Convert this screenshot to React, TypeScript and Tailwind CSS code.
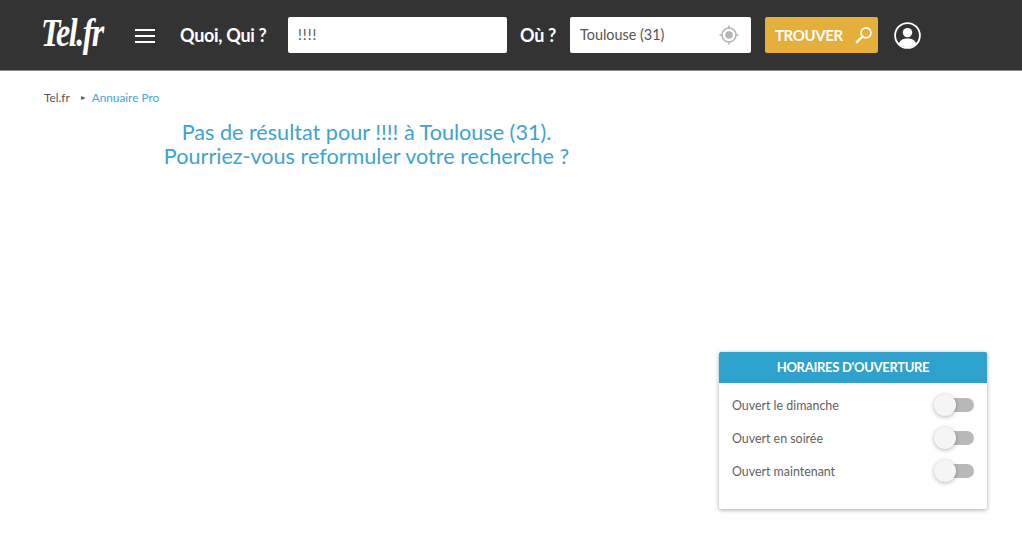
const FONT = "font-['Lato','Liberation_Sans',sans-serif]";

function MenuIcon() {
  return (
    <svg width="20" height="14" viewBox="0 0 20 14" fill="none" className="ml-[31px] mt-px">
      <path d="M0 1h20M0 7h20M0 13h20" stroke="#fff" strokeWidth="2" />
    </svg>
  );
}

function LocateIcon() {
  return (
    <svg width="20" height="20" viewBox="0 0 20 20" fill="none" className="-translate-x-px">
      <circle cx="10" cy="10" r="7" stroke="#b5b5b5" strokeWidth="1.6" />
      <circle cx="10" cy="10" r="3.8" fill="#b5b5b5" />
      <path d="M10 0.5v3M10 16.5v3M0.5 10h3M16.5 10h3" stroke="#b5b5b5" strokeWidth="1.6" />
    </svg>
  );
}

function SearchIcon() {
  return (
    <svg width="18" height="18" viewBox="0 0 18 18" fill="none">
      <circle cx="11" cy="6.8" r="5" stroke="#fff" strokeWidth="1.7" />
      <path d="M7.4 10.6L1.8 16.2" stroke="#fff" strokeWidth="2.4" strokeLinecap="round" />
    </svg>
  );
}

function UserIcon() {
  return (
    <svg width="27" height="27" viewBox="0 0 27 27" fill="none">
      <circle cx="13.5" cy="13.5" r="12.4" stroke="#fff" strokeWidth="1.8" />
      <circle cx="13.5" cy="10.6" r="4.7" fill="#fff" />
      <path d="M4.8 21.5C6.5 17.8 9.5 16.6 13.5 16.6s7 1.2 8.7 4.9C20 24 17 25.2 13.5 25.2S7 24 4.8 21.5z" fill="#fff" />
    </svg>
  );
}

function Toggle() {
  return (
    <div className="relative mb-[2px] h-[14px] w-[34px] rounded-full bg-[#b9b9b9]">
      <div className="absolute left-[-6px] top-[-4px] h-[22px] w-[22px] rounded-full bg-[#f5f5f5] shadow-[0_1px_4px_rgba(0,0,0,0.3)]" />
    </div>
  );
}

export default function App() {
  const filters = ["Ouvert le dimanche", "Ouvert en soirée", "Ouvert maintenant"];

  return (
    <div className={`${FONT} h-[550px] w-[1022px] overflow-hidden bg-white`}>
      {/* Header */}
      <header className="flex h-[71px] items-center border-b border-[#8a8a8a] bg-[#333333] pl-[41px] text-white">
        <span className="mb-[6px] w-[63px] origin-left scale-y-[1.25] font-['Liberation_Serif',serif] text-[32px] font-bold italic leading-none tracking-[-1.5px]">Tel.fr</span>
        <MenuIcon />
        <span className="ml-[25px] w-[108px] text-[18px] font-bold tracking-[-0.3px]">Quoi, Qui ?</span>
        <input
          readOnly
          value="!!!!"
          className="h-9 w-[219px] rounded-[2px] bg-white px-[10px] pb-px text-[14.4px] tracking-[1px] text-[#555] outline-none"
        />
        <span className="ml-[13px] w-[50px] text-[18px] font-bold tracking-[-0.3px]">Où ?</span>
        <div className="flex h-9 w-[181px] items-center justify-between rounded-[2px] bg-white pl-[10px] pr-[11px]">
          <span className="pb-px text-[14.4px] text-[#555]">Toulouse (31)</span>
          <LocateIcon />
        </div>
        <button className="ml-[14px] flex h-9 w-[113px] items-center justify-between rounded-[2px] bg-[#e6ae3a] pl-[10px] pr-[5px] text-[15px] font-bold tracking-[-0.4px]">
          TROUVER
          <SearchIcon />
        </button>
        <div className="ml-[16px] flex">
          <UserIcon />
        </div>
      </header>

      <main className="flex">
        <div className="w-[719px] shrink-0">
          {/* Fil d'ariane */}
          <nav className="ml-[44px] mt-[19px] flex items-center text-[11.8px] leading-[15px]">
            <span className="text-[#555]">Tel.fr</span>
            <span className="ml-[10px] text-[7px] text-[#555]">►</span>
            <span className="ml-[5px] text-[#4aa5cf]">Annuaire Pro</span>
          </nav>
          <h1 className="ml-[14px] mt-[15px] w-[705px] text-center text-[21.6px] font-normal leading-[24px] text-[#3ea3cf]">
            Pas de résultat pour !!!! à Toulouse (31).
            <br />
            Pourriez-vous reformuler votre recherche ?
          </h1>
        </div>

        {/* Filtres */}
        <aside className="mt-[281px] h-[157px] w-[268px] overflow-hidden rounded-[2px] bg-white shadow-[0_1px_4px_rgba(0,0,0,0.35)]">
          <div className="flex h-[31px] items-center justify-center bg-[#2ea1cc] text-[13px] font-bold tracking-[-0.3px] text-white">
            HORAIRES D'OUVERTURE
          </div>
          <div className="flex flex-col gap-[13px] pl-[13px] pr-[13px] pt-[13px]">
            {filters.map((f) => (
              <div key={f} className="flex h-5 items-center justify-between text-[12.4px] text-[#5f5f5f]">
                {f}
                <Toggle />
              </div>
            ))}
          </div>
        </aside>
      </main>
    </div>
  );
}
